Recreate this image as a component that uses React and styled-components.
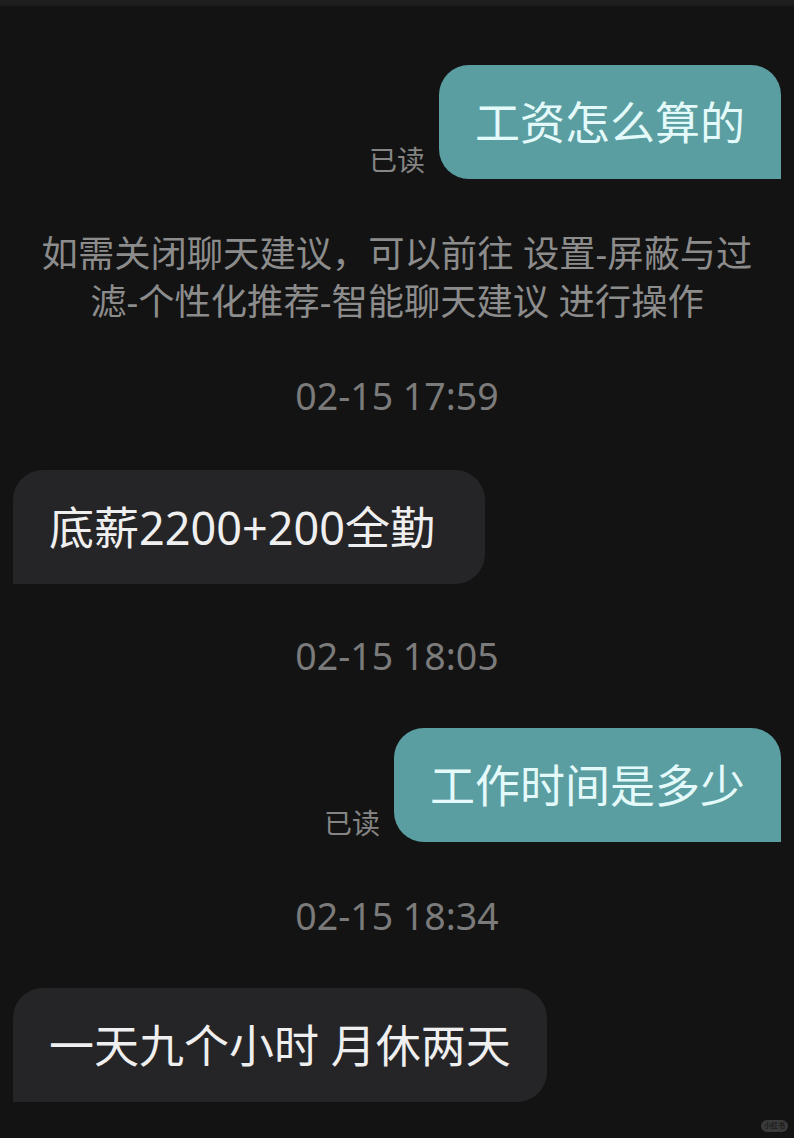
import React from "react"
import styled, { createGlobalStyle } from "styled-components"

const GlobalStyle = createGlobalStyle`
  html, body {
    margin: 0;
    padding: 0;
    background: #131313;
  }
  body {
    font-family: "Noto Sans", "Noto Sans CJK SC", sans-serif;
  }
`

const App = () => (
  <>
    <GlobalStyle />
    <Screen>
      <TopBar />
      <Chat>
        <Row $mine $gap={58}>
          <ReadMark>已读</ReadMark>
          <Bubble $mine>工资怎么算的</Bubble>
        </Row>

        <Tip>
          <TipLine>如需关闭聊天建议，可以前往 设置-屏蔽与过</TipLine>
          <TipLine>滤-个性化推荐-智能聊天建议 进行操作</TipLine>
        </Tip>

        <Time>02-15 17:59</Time>
        <Row $gap={49}>
          <Bubble $tail={50}>底薪2200+200全勤</Bubble>
        </Row>

        <Time $gap={47}>02-15 18:05</Time>
        <Row $mine>
          <ReadMark>已读</ReadMark>
          <Bubble $mine>工作时间是多少</Bubble>
        </Row>

        <Time $gap={49}>02-15 18:34</Time>
        <Row>
          <Bubble>一天九个小时 月休两天</Bubble>
        </Row>
      </Chat>
      <Watermark>小红书</Watermark>
    </Screen>
  </>
)

const Screen = styled.div`
  position: relative;
  width: 794px;
  height: 1138px;
  overflow: hidden;
  background: #131313;
`

const TopBar = styled.div`
  height: 7px;
  background: linear-gradient(#1f1f1f 0%, #1e1e1e 60%, #151515 100%);
`

const Chat = styled.div`
  display: flex;
  flex-direction: column;
  padding: 0 13px;
`

const Row = styled.div`
  display: flex;
  align-items: flex-end;
  justify-content: ${(p) => (p.$mine ? "flex-end" : "flex-start")};
  gap: 14px;
  margin-top: ${(p) => p.$gap || 47}px;
`

const Bubble = styled.div`
  display: flex;
  align-items: center;
  height: 114px;
  padding: 0 ${(p) => p.$tail || 36}px 0 36px;
  box-sizing: border-box;
  font-size: 45px;
  line-height: 1;
  white-space: nowrap;
  color: ${(p) => (p.$mine ? "#e4fafa" : "#efefef")};
  background: ${(p) => (p.$mine ? "#5a9ea1" : "#252527")};
  border-radius: ${(p) => (p.$mine ? "30px 30px 0 30px" : "30px 30px 30px 0")};
`

const ReadMark = styled.span`
  font-size: 28px;
  line-height: 1;
  color: #858585;
  margin-bottom: 5px;
`

const Tip = styled.div`
  margin-top: 50px;
  display: flex;
  flex-direction: column;
  align-items: center;
  font-size: 36.3px;
  line-height: 48px;
  color: #8c8c8c;
`

const TipLine = styled.span`
  white-space: nowrap;
`

const Time = styled.div`
  margin-top: ${(p) => p.$gap || 46}px;
  text-align: center;
  font-size: 37.5px;
  line-height: 50px;
  color: #7b7b7b;
`

const Watermark = styled.div`
  position: absolute;
  right: 6px;
  bottom: 6px;
  padding: 1px 3px;
  border-radius: 7px;
  background: #3a3a3a;
  color: #1c1c1c;
  font-size: 7px;
  line-height: 10px;
  font-weight: 700;
`

export default App
